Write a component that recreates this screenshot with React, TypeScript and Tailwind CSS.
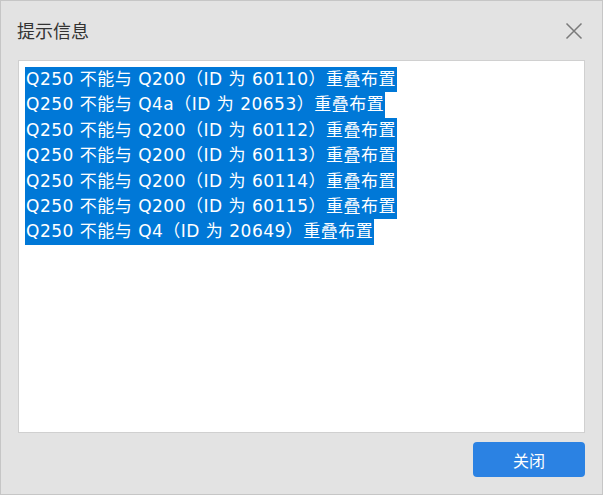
const lines = [
  "Q250 不能与 Q200（ID 为 60110）重叠布置",
  "Q250 不能与 Q4a（ID 为 20653）重叠布置",
  "Q250 不能与 Q200（ID 为 60112）重叠布置",
  "Q250 不能与 Q200（ID 为 60113）重叠布置",
  "Q250 不能与 Q200（ID 为 60114）重叠布置",
  "Q250 不能与 Q200（ID 为 60115）重叠布置",
  "Q250 不能与 Q4（ID 为 20649）重叠布置",
];

export default function App() {
  return (
    <div
      className="flex h-[495px] w-[603px] flex-col border border-[#c6c6c6] bg-[#e3e3e3] text-[#333]"
      style={{ fontFamily: '"Noto Sans CJK SC", "Noto Sans", sans-serif' }}
    >
      {/* title bar */}
      <div className="flex h-[59px] shrink-0 items-center justify-between pl-[16px] pr-[19px]">
        <span className="text-[18px] text-[#333]">提示信息</span>
        <svg width="18" height="18" viewBox="0 0 18 18" className="text-[#7a7a7a]">
          <path d="M1.5 1.5 L16.5 16.5 M16.5 1.5 L1.5 16.5" stroke="currentColor" strokeWidth="1.5" fill="none" />
        </svg>
      </div>

      {/* message box */}
      <div
        className="mx-[17px] h-[373px] shrink-0 border border-[#d0d0d0] bg-white pl-[6px] pt-[6px]"
        style={{ fontFamily: '"DejaVu Sans", "Noto Sans CJK SC", sans-serif' }}
      >
        {lines.map((l) => (
          <div
            key={l}
            className="w-fit bg-[#0078d7] pl-[1px] pr-[1px] text-[17px] leading-[25.4px] tracking-[0.5px] text-white"
          >
            {l}
          </div>
        ))}
      </div>

      {/* footer */}
      <div className="flex flex-1 items-start justify-end pr-[17px] pt-[9px]">
        <button className="h-[35px] w-[112px] rounded-[4px] bg-[#2b82e3] text-[16px] text-white">关闭</button>
      </div>
    </div>
  );
}
